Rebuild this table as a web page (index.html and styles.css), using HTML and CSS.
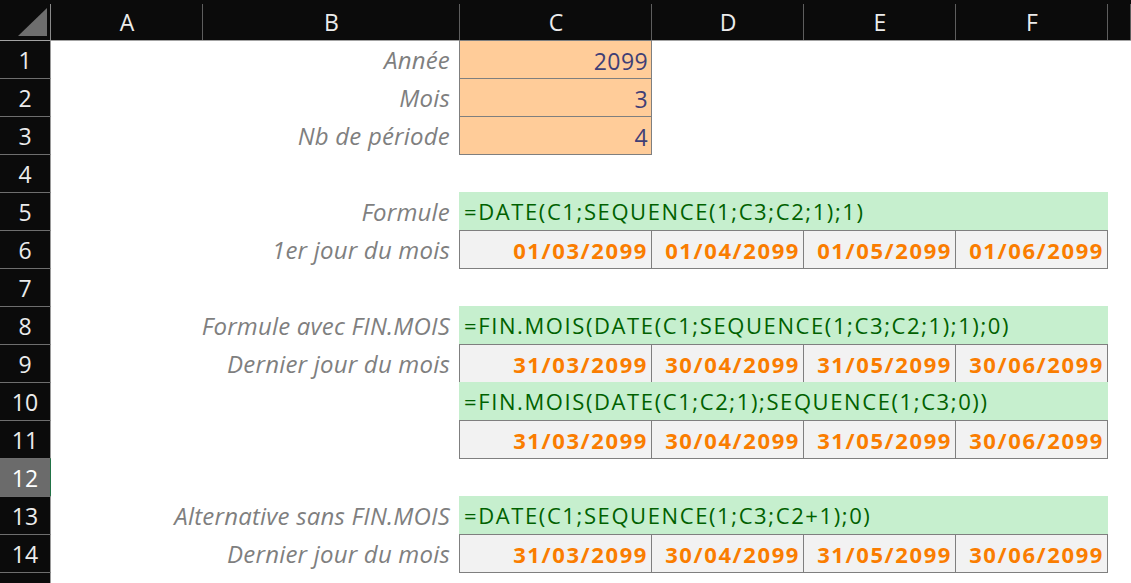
FILE: index.html
```html
<!DOCTYPE html>
<html lang="fr">
<head>
<meta charset="utf-8">
<title>Feuille</title>
<link rel="stylesheet" href="styles.css">
</head>
<body>
<div class="sheet">
  <div class="corner">
    <svg class="corner-tri" width="51" height="40" viewBox="0 0 51 40"><polygon points="18,36 47,8 47,36" fill="#6e6e6e"/></svg>
  </div>
  <div class="colhead">A</div>
  <div class="colhead">B</div>
  <div class="colhead">C</div>
  <div class="colhead">D</div>
  <div class="colhead">E</div>
  <div class="colhead">F</div>
  <div class="colhead"></div>

  <div class="rowhead r1 first">1</div>
  <div class="rowhead r2">2</div>
  <div class="rowhead r3">3</div>
  <div class="rowhead r4">4</div>
  <div class="rowhead r5">5</div>
  <div class="rowhead r6">6</div>
  <div class="rowhead r7">7</div>
  <div class="rowhead r8">8</div>
  <div class="rowhead r9">9</div>
  <div class="rowhead r10">10</div>
  <div class="rowhead r11">11</div>
  <div class="rowhead r12 selected">12</div>
  <div class="rowhead r13">13</div>
  <div class="rowhead r14">14</div>
  <div class="rowhead r15"></div>

  <div class="label r1">Année</div>
  <div class="label r2">Mois</div>
  <div class="label r3">Nb de période</div>
  <div class="inputs">
    <div class="input">2099</div>
    <div class="input">3</div>
    <div class="input">4</div>
  </div>

  <div class="label r5">Formule</div>
  <div class="formula r5">=DATE(C1;SEQUENCE(1;C3;C2;1);1)</div>
  <div class="label r6">1er jour du mois</div>
  <div class="dates r6">
    <div class="date">01/03/2099</div>
    <div class="date">01/04/2099</div>
    <div class="date">01/05/2099</div>
    <div class="date">01/06/2099</div>
  </div>

  <div class="label r8">Formule avec FIN.MOIS</div>
  <div class="formula r8">=FIN.MOIS(DATE(C1;SEQUENCE(1;C3;C2;1);1);0)</div>
  <div class="label r9">Dernier jour du mois</div>
  <div class="dates r9">
    <div class="date">31/03/2099</div>
    <div class="date">30/04/2099</div>
    <div class="date">31/05/2099</div>
    <div class="date">30/06/2099</div>
  </div>
  <div class="formula r10">=FIN.MOIS(DATE(C1;C2;1);SEQUENCE(1;C3;0))</div>
  <div class="dates r11">
    <div class="date">31/03/2099</div>
    <div class="date">30/04/2099</div>
    <div class="date">31/05/2099</div>
    <div class="date">30/06/2099</div>
  </div>

  <div class="label r13">Alternative sans FIN.MOIS</div>
  <div class="formula r13">=DATE(C1;SEQUENCE(1;C3;C2+1);0)</div>
  <div class="label r14">Dernier jour du mois</div>
  <div class="dates r14">
    <div class="date">31/03/2099</div>
    <div class="date">30/04/2099</div>
    <div class="date">31/05/2099</div>
    <div class="date">30/06/2099</div>
  </div>
</div>
</body>
</html>
```

FILE: styles.css
```css
html, body {
  margin: 0;
  padding: 0;
  background: #ffffff;
}

body {
  width: 1131px;
  height: 583px;
  overflow: hidden;
  font-family: "Open Sans", "Noto Sans", sans-serif;
}

.sheet {
  display: grid;
  grid-template-columns: 51px 152px 257px 192px 152px 152px 152px 1fr;
  grid-template-rows: 40px repeat(15, 38px);
  width: 1131px;
  background: #ffffff;
}

/* headers */
.corner,
.colhead {
  grid-row: 1;
  background: linear-gradient(#5e5e5e, #5e5e5e) right bottom / 1px 36px no-repeat, #0b0b0b;
  box-shadow: 0 1px 0 #a3a3a3;
  color: #ececec;
  font-size: 23px;
  display: flex;
  align-items: center;
  justify-content: center;
  padding-top: 3px;
  box-sizing: border-box;
}

.corner {
  grid-column: 1;
  padding: 0;
  display: block;
  background: linear-gradient(#8a8a8a, #8a8a8a) right bottom / 1px 36px no-repeat, #0b0b0b;
}

.corner-tri {
  display: block;
}

.rowhead {
  grid-column: 1;
  background: #0b0b0b;
  color: #ececec;
  font-size: 23px;
  border-right: 1px solid #9a9a9a;
  border-top: 1px solid #6e6e6e;
  display: flex;
  align-items: center;
  justify-content: center;
  box-sizing: border-box;
}

.rowhead.first {
  border-top-color: #a3a3a3;
}

.rowhead.selected {
  background: #6b6b6b;
  color: #ffffff;
  border-right-color: #217346;
}

/* row placement */
.r1 { grid-row: 2; }
.r2 { grid-row: 3; }
.r3 { grid-row: 4; }
.r4 { grid-row: 5; }
.r5 { grid-row: 6; }
.r6 { grid-row: 7; }
.r7 { grid-row: 8; }
.r8 { grid-row: 9; }
.r9 { grid-row: 10; }
.r10 { grid-row: 11; }
.r11 { grid-row: 12; }
.r12 { grid-row: 13; }
.r13 { grid-row: 14; }
.r14 { grid-row: 15; }
.r15 { grid-row: 16; }

/* cells */
.label {
  grid-column: 3;
  display: flex;
  align-items: center;
  justify-content: flex-end;
  padding: 1px 10px 0 0;
  white-space: nowrap;
  font-style: italic;
  font-size: 24px;
  letter-spacing: 0.2px;
  color: #7f7f7f;
}

.inputs {
  grid-column: 4;
  grid-row: 2 / 5;
  margin-left: -1px;
  margin-bottom: -1px;
  display: grid;
  grid-template-rows: repeat(3, 1fr);
  gap: 1px;
  padding: 1px;
  background: #7f7f7f;
}

.input {
  background: #ffcc99;
  color: #3f3f76;
  font-size: 23px;
  letter-spacing: 0.4px;
  display: flex;
  align-items: center;
  justify-content: flex-end;
  padding: 2px 3px 0 0;
}

.formula {
  grid-column: 4 / 8;
  margin-left: -1px;
  background: #c6efce;
  color: #006100;
  font-size: 22px;
  letter-spacing: 1.6px;
  display: flex;
  align-items: center;
  padding-left: 5px;
  white-space: nowrap;
}

.dates {
  grid-column: 4 / 8;
  margin-left: -1px;
  margin-bottom: -1px;
  display: grid;
  grid-template-columns: 191px 151px 151px 151px;
  gap: 1px;
  padding: 1px;
  background: #7f7f7f;
}

.date {
  background: #f2f2f2;
  color: #fa7d00;
  font-weight: 700;
  font-size: 22px;
  letter-spacing: 1.6px;
  display: flex;
  align-items: center;
  justify-content: flex-end;
  padding-right: 3px;
  white-space: nowrap;
}
```
